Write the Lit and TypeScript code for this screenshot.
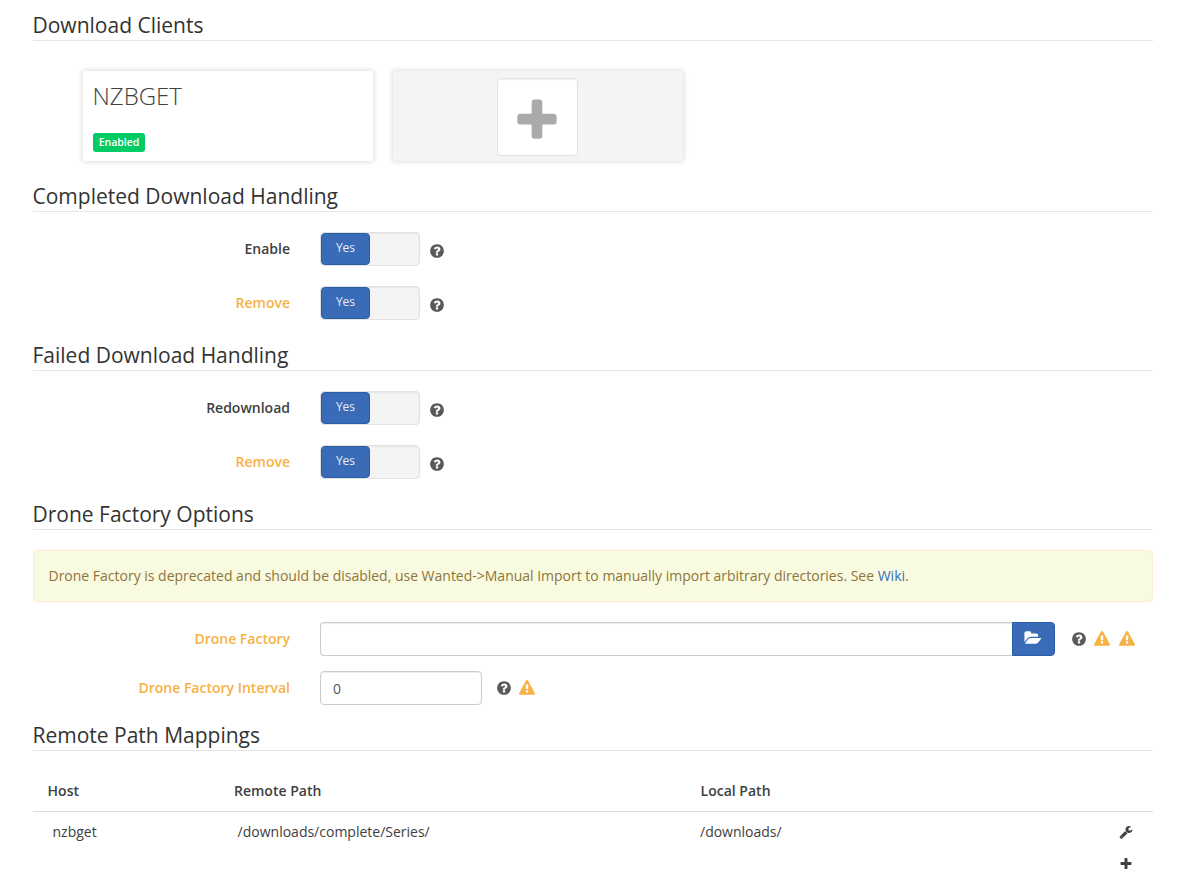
import { LitElement, html, css, svg } from "lit";
import { customElement, property } from "lit/decorators.js";

const ICONS: Record<string, string> = {
  help: "M1024 1376v-192q0-14-9-23t-23-9h-192q-14 0-23 9t-9 23v192q0 14 9 23t23 9h192q14 0 23-9t9-23zm256-672q0-88-55.5-163t-138.5-116-170-41q-243 0-371 213-15 24 8 42l132 100q7 6 19 6 16 0 25-12 53-68 86-92 34-24 86-24 48 0 85.5 26t37.5 59q0 38-20 61t-68 45q-63 28-115.5 86.5t-52.5 125.5v36q0 14 9 23t23 9h192q14 0 23-9t9-23q0-19 21.5-49.5t54.5-49.5q32-18 49-28.5t46-35 44.5-48 28-60.5 12.5-81zm384 192q0 209-103 385.5t-279.5 279.5-385.5 103-385.5-103-279.5-279.5-103-385.5 103-385.5 279.5-279.5 385.5-103 385.5 103 279.5 279.5 103 385.5z",
  warning: "M1024 1375v-190q0-14-9.5-23.5t-22.5-9.5h-192q-13 0-22.5 9.5t-9.5 23.5v190q0 14 9.5 23.5t22.5 9.5h192q13 0 22.5-9.5t9.5-23.5zm-2-374l18-459q0-12-10-19-13-11-24-11h-220q-11 0-24 11-10 7-10 21l17 457q0 10 10 16.5t24 6.5h185q14 0 23.5-6.5t10.5-16.5zm-14-934l768 1408q35 63-2 126-17 29-46.5 46t-63.5 17h-1536q-34 0-63.5-17t-46.5-46q-37-63-2-126l768-1408q17-31 47-49t65-18 65 18 47 49z",
  folder: "M1815 952q0 31-31 66l-336 396q-43 51-120.5 86.5t-143.5 35.5h-1088q-34 0-60.5-13t-26.5-43q0-31 31-66l336-396q43-51 120.5-86.5t143.5-35.5h1088q34 0 60.5 13t26.5 43zm-343-344v160h-832q-94 0-197 47.5t-164 119.5l-337 396-5 6q0-4-.5-12.5t-.5-12.5v-960q0-92 66-158t158-66h320q92 0 158 66t66 158v32h544q92 0 158 66t66 158z",
  wrench: "M448 1472q0-26-19-45t-45-19-45 19-19 45 19 45 45 19 45-19 19-45zm644-420l-682 682q-37 37-90 37-52 0-91-37l-106-108q-38-36-38-90 0-53 38-91l681-681q39 98 114.5 173.5t173.5 114.5zm634-435q0 39-23 106-47 134-164.5 217.5t-258.5 83.5q-185 0-316.5-131.5t-131.5-316.5 131.5-316.5 316.5-131.5q58 0 121.5 16.5t107.5 46.5q16 11 16 28t-16 28l-293 169v224l193 107q5-3 79-48.5t135.5-81 70.5-35.5q15 0 23.5 10t8.5 25z",
  plus: "M1600 736v192q0 40-28 68t-68 28h-416v416q0 40-28 68t-68 28h-192q-40 0-68-28t-28-68v-416h-416q-40 0-68-28t-28-68v-192q0-40 28-68t68-28h416v-416q0-40 28-68t68-28h192q40 0 68 28t28 68v416h416q40 0 68 28t28 68z",
};

@customElement("ui-icon")
export class UiIcon extends LitElement {
  @property() name = "help";
  static styles = css`
    :host { display: block; width: 16px; height: 16px; flex: none; }
    svg { display: block; width: 100%; height: 100%; overflow: visible; fill: currentColor; }
  `;
  render() {
    return html`<svg viewBox="0 0 1792 1792">${svg`<path d=${ICONS[this.name]}></path>`}</svg>`;
  }
}

@customElement("toggle-row")
export class ToggleRow extends LitElement {
  @property() label = "";
  @property({ type: Boolean }) advanced = false;
  static styles = css`
    :host { display: flex; height: 34px; margin-bottom: 20px; }
    .label { width: 257px; margin-right: 30px; text-align: right; font-weight: 600; line-height: 34px; }
    .advanced { color: #f7b144; }
    .switch { box-sizing: border-box; width: 100px; height: 34px; border: 1px solid #e2e2e2; border-radius: 4px; background: #f4f4f4; box-shadow: inset 0 1px 2px rgba(0,0,0,.06); }
    .knob { box-sizing: border-box; width: 49px; height: 32px; border: 1px solid #2d5ca6; border-radius: 4px; background: #396bb7; color: #e7edf6; font-size: 12px; line-height: 28px; text-align: center; }
    ui-icon { margin: 11.4px 0 0 8.8px; color: #595959; }
  `;
  render() {
    return html`<span class="label ${this.advanced ? "advanced" : ""}">${this.label}</span>
      <div class="switch"><div class="knob">Yes</div></div>
      <ui-icon name="help"></ui-icon>`;
  }
}

@customElement("app-root")
export class AppRoot extends LitElement {
  static styles = css`
    :host { display: block; box-sizing: border-box; height: 884px; overflow: hidden; padding: 10px 26px 0 33px; background: #fff; color: #404040; font: 14px/20px "Open Sans", sans-serif; }
    h2 { box-sizing: border-box; height: 31px; margin: 0; border-bottom: 1px solid #e5e5e5; color: #333; font-size: 21px; font-weight: 400; line-height: 30px; text-indent: -0.5px; }
    .cards { display: flex; gap: 20px; margin: 30px 0 20px 50px; }
    .card { box-sizing: border-box; width: 290px; height: 90px; border-radius: 3px; padding: 10px; box-shadow: 0 0 5px 1px #ddd; }
    .add { display: flex; justify-content: center; padding: 7px 2px 0 0; background: #f4f4f4; }
    .client { margin: 0; font-size: 24px; font-weight: 300; line-height: 30px; text-indent: -0.5px; }
    .badge { display: block; width: 52px; height: 19px; margin-top: 22px; border-radius: 3px; background: #00cc66; color: #fff; font-size: 10.5px; font-weight: 600; line-height: 18px; text-align: center; }
    .tile { box-sizing: border-box; display: flex; justify-content: center; padding-top: 17px; width: 81px; height: 78px; border: 1px solid #e3e3e3; border-radius: 4px; background: #fff; color: #aaa; box-shadow: inset 0 1px 1px rgba(0,0,0,.05); }
    .tile ui-icon { width: 50px; height: 50px; }
    .rows { padding-top: 20px; height: 107px; padding-bottom: 1px; }
    .alert { box-sizing: border-box; height: 52px; margin: 20px 0; padding: 15px 15px 15px 14.5px; border: 1px solid #fbeed0; border-radius: 4px; background: #f9fbe0; color: #8f733c; letter-spacing: -0.008px; }
    .link { color: #396bb7; }
    .field { display: flex; height: 34px; }
    .field + .field { margin: 15px 0; }
    .label { width: 257px; margin-right: 30px; color: #f7b144; text-align: right; font-weight: 600; line-height: 34px; }
    .input { box-sizing: border-box; height: 34px; padding: 0 12px; border: 1px solid #ccc; border-radius: 4px; color: #555; line-height: 34px; box-shadow: inset 0 1px 1px rgba(0,0,0,.075); }
    .path { width: 692px; border-right: 0; border-radius: 4px 0 0 4px; }
    .interval { width: 162px; }
    .browse { box-sizing: border-box; display: flex; width: 43px; height: 34px; padding: 7px 0 0 12.4px; border: 1px solid #2d5ca6; border-radius: 0 4px 4px 0; background: #396bb7; color: #fff; }
    .hints { display: flex; padding: 9.4px 0 0 13.7px; gap: 7.4px; color: #595959; }
    .path-hints { padding-left: 15.6px; }
    .path-hints ui-icon:last-child { margin-left: 1.2px; }
    .warn { color: #f7b144; }
    .table { padding-top: 20px; }
    .row { display: grid; grid-template-columns: 187px 466px 1fr 34px; height: 40px; line-height: 40px; }
    .head { border-bottom: 1px solid #ddd; font-weight: 600; }
    .head span { padding-left: 14.6px; }
    .head span:nth-child(2) { padding-left: 14px; }
    .body span:nth-child(1) { padding-left: 19.5px; }
    .body span:nth-child(2) { padding-left: 17.6px; }
    .body span:nth-child(3) { padding-left: 14px; }
    .small { width: 14px; height: 14px; margin-top: 13px; }
    .foot { display: flex; justify-content: flex-end; padding-right: 20px; }
    .foot .small { margin-top: 5px; }
  `;
  render() {
    return html`
      <h2>Download Clients</h2>
      <div class="cards">
        <div class="card"><h3 class="client">NZBGET</h3><span class="badge">Enabled</span></div>
        <div class="card add"><div class="tile"><ui-icon name="plus"></ui-icon></div></div>
      </div>
      <h2>Completed Download Handling</h2>
      <div class="rows">
        <toggle-row label="Enable"></toggle-row>
        <toggle-row label="Remove" advanced></toggle-row>
      </div>
      <h2>Failed Download Handling</h2>
      <div class="rows">
        <toggle-row label="Redownload"></toggle-row>
        <toggle-row label="Remove" advanced></toggle-row>
      </div>
      <h2>Drone Factory Options</h2>
      <div class="alert">Drone Factory is deprecated and should be disabled, use Wanted-&gt;Manual Import to manually import arbitrary directories. See <span class="link">Wiki</span>.</div>
      <div class="field">
        <span class="label">Drone Factory</span>
        <div class="input path"></div><div class="browse"><ui-icon name="folder"></ui-icon></div>
        <div class="hints path-hints"><ui-icon name="help"></ui-icon><ui-icon class="warn" name="warning"></ui-icon><ui-icon class="warn" name="warning"></ui-icon></div>
      </div>
      <div class="field">
        <span class="label">Drone Factory Interval</span>
        <div class="input interval">0</div>
        <div class="hints"><ui-icon name="help"></ui-icon><ui-icon class="warn" name="warning"></ui-icon></div>
      </div>
      <h2>Remote Path Mappings</h2>
      <div class="table">
        <div class="row head"><span>Host</span><span>Remote Path</span><span>Local Path</span></div>
        <div class="row body"><span>nzbget</span><span>/downloads/complete/Series/</span><span>/downloads/</span><ui-icon class="small" name="wrench"></ui-icon></div>
        <div class="foot"><ui-icon class="small" name="plus"></ui-icon></div>
      </div>
    `;
  }
}
